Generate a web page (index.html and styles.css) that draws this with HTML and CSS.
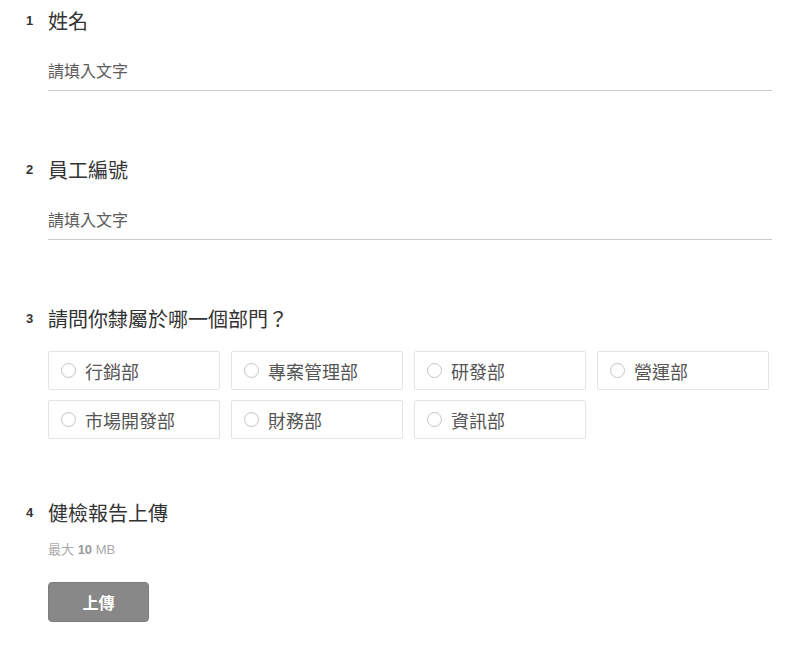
FILE: index.html
```html
<!DOCTYPE html>
<html lang="zh-Hant">
<head>
<meta charset="utf-8">
<title>表單</title>
<link rel="stylesheet" href="styles.css">
</head>
<body>
<form class="form">
  <section class="question">
    <span class="num">1</span>
    <div class="body">
      <h2 class="title">姓名</h2>
      <input class="text-input" type="text" placeholder="請填入文字">
    </div>
  </section>
  <section class="question">
    <span class="num">2</span>
    <div class="body">
      <h2 class="title">員工編號</h2>
      <input class="text-input" type="text" placeholder="請填入文字">
    </div>
  </section>
  <section class="question question-choices">
    <span class="num">3</span>
    <div class="body">
      <h2 class="title">請問你隸屬於哪一個部門？</h2>
      <div class="options">
        <label class="option"><input type="radio" name="dept"><span>行銷部</span></label>
        <label class="option"><input type="radio" name="dept"><span>專案管理部</span></label>
        <label class="option"><input type="radio" name="dept"><span>研發部</span></label>
        <label class="option"><input type="radio" name="dept"><span>營運部</span></label>
        <label class="option"><input type="radio" name="dept"><span>市場開發部</span></label>
        <label class="option"><input type="radio" name="dept"><span>財務部</span></label>
        <label class="option"><input type="radio" name="dept"><span>資訊部</span></label>
      </div>
    </div>
  </section>
  <section class="question question-last">
    <span class="num">4</span>
    <div class="body">
      <h2 class="title">健檢報告上傳</h2>
      <p class="hint">最大 <b>10</b> MB</p>
      <button type="button" class="upload">上傳</button>
    </div>
  </section>
</form>
</body>
</html>
```
FILE: styles.css
```css
html, body {
  margin: 0;
  padding: 0;
  background: #fff;
}
body {
  font-family: "Liberation Sans", "Noto Sans CJK TC", sans-serif;
  color: #333;
}
.form {
  padding: 10px 28px 0 26px;
}
.question {
  display: grid;
  grid-template-columns: 22px 1fr;
  margin-bottom: 68px;
}
.question-choices {
  margin-bottom: 63px;
}
.question-last {
  margin-bottom: 0;
}
.num {
  font-size: 13px;
  font-weight: bold;
  line-height: 22px;
  color: #333;
}
.title {
  margin: 0;
  font-size: 20px;
  font-weight: normal;
  line-height: 24px;
  color: #333;
}
.text-input {
  display: block;
  box-sizing: border-box;
  width: 100%;
  height: 41px;
  margin-top: 16px;
  padding: 4px 0 0;
  border: 0;
  border-bottom: 1px solid #c9c9c9;
  outline: none;
  background: transparent;
  font-family: "Liberation Sans", "Noto Sans CJK TC", sans-serif;
  font-size: 16px;
  color: #555;
}
.text-input::placeholder {
  color: #5c5c5c;
  opacity: 1;
}
.options {
  display: grid;
  grid-template-columns: repeat(4, 172px);
  column-gap: 11px;
  row-gap: 10px;
  margin-top: 19px;
}
.option {
  box-sizing: border-box;
  height: 39px;
  display: flex;
  align-items: center;
  gap: 9px;
  padding-left: 12px;
  border: 1px solid #e4e4e4;
  border-radius: 2px;
  font-size: 18px;
  color: #555;
}
.option input {
  appearance: none;
  -webkit-appearance: none;
  margin: 0;
  width: 15px;
  height: 15px;
  border: 1px solid #c4c4c4;
  border-radius: 50%;
  flex: none;
}
.hint {
  margin: 15px 0 0;
  font-size: 13px;
  line-height: 18px;
  color: #aaa;
}
.hint b {
  color: #999;
}
.upload {
  display: block;
  margin-top: 23px;
  width: 101px;
  height: 40px;
  border: 1px solid #7c7c7c;
  border-radius: 4px;
  background: #888;
  color: #fff;
  font-family: "Liberation Sans", "Noto Sans CJK TC", sans-serif;
  font-size: 16px;
  font-weight: bold;
}
```
